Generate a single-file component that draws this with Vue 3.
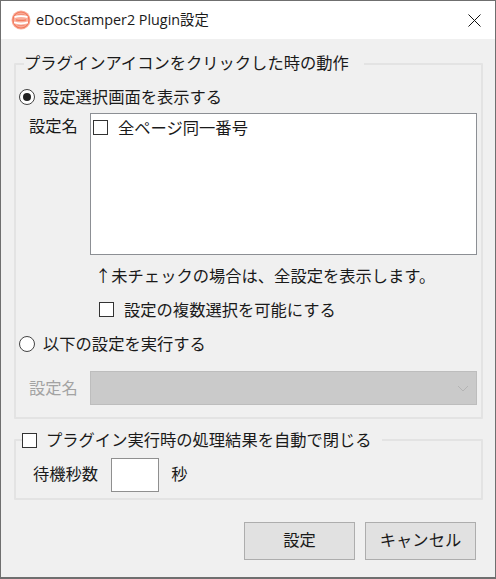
<template>
  <div class="window">
    <header class="titlebar">
      <svg class="app-icon" width="20" height="20" viewBox="0 0 20 20">
        <circle cx="10" cy="10" r="9.5" fill="#f9ae9b" />
        <circle cx="10" cy="10" r="8" fill="none" stroke="#f2775a" stroke-width="1.2" />
        <path d="M3.5 7.2q6.5-2 13 0M3 12.4q7 2.2 14 0" fill="none" stroke="#fff" stroke-width="1.8" />
        <path d="M5 9.8q5 1.2 10 0" fill="none" stroke="#f27a5e" stroke-width="1.2" />
        <path d="M6.5 4.4h7M6.5 15.6h7" stroke="#f28b73" stroke-width="1" />
      </svg>
      <span class="title">eDocStamper2 Plugin設定</span>
      <svg class="close" width="13" height="13" viewBox="0 0 13 13">
        <path d="M.5.5l12 12M12.5.5l-12 12" stroke="#111" stroke-width="1" fill="none" />
      </svg>
    </header>

    <main class="content">
      <fieldset class="group action-group">
        <legend>プラグインアイコンをクリックした時の動作</legend>

        <label class="row radio-row">
          <span class="radio checked"></span>
          <span>設定選択画面を表示する</span>
        </label>

        <div class="list-row">
          <span class="field-label">設定名</span>
          <div class="listbox">
            <label v-for="item in settings" :key="item" class="list-item">
              <span class="checkbox"></span>
              <span>{{ item }}</span>
            </label>
          </div>
        </div>

        <p class="hint">↑未チェックの場合は、全設定を表示します。</p>

        <label class="row multi-row">
          <span class="checkbox"></span>
          <span>設定の複数選択を可能にする</span>
        </label>

        <label class="row radio-row second">
          <span class="radio"></span>
          <span>以下の設定を実行する</span>
        </label>

        <div class="select-row">
          <span class="field-label disabled">設定名</span>
          <div class="select">
            <svg width="12" height="7" viewBox="0 0 12 7">
              <path d="M1 1l5 5 5-5" fill="none" stroke="#b4b4b4" stroke-width="1" />
            </svg>
          </div>
        </div>
      </fieldset>

      <fieldset class="group close-group">
        <legend class="check-legend">
          <span class="checkbox"></span>
          <span class="lift">プラグイン実行時の処理結果を自動で閉じる</span>
        </legend>
        <div class="wait-row">
          <span class="lift-more">待機秒数</span>
          <span class="seconds-input"></span>
          <span class="lift-more">秒</span>
        </div>
      </fieldset>

      <footer class="buttons">
        <button class="btn">設定</button>
        <button class="btn">キャンセル</button>
      </footer>
    </main>
  </div>
</template>

<script setup>
const settings = ['全ページ同一番号']
</script>

<style>
html, body {
  margin: 0;
  background: #f0f0f0;
}
</style>

<style scoped>
.window {
  width: 496px;
  height: 579px;
  box-sizing: border-box;
  border: 1px solid #6f6f6f;
  border-bottom-width: 2px;
  display: flex;
  flex-direction: column;
  background: #f0f0f0;
  color: #1a1a1a;
  font-family: "Noto Sans CJK JP", "Noto Sans", sans-serif;
  font-size: 16.3px;
  line-height: 24px;
  overflow: hidden;
}

.titlebar {
  height: 38px;
  flex: none;
  background: #fff;
  display: flex;
  align-items: center;
  padding: 0 14px 0 10px;
}

.app-icon {
  flex: none;
  margin-right: 5px;
}

.title {
  flex: 1;
  font-family: "Open Sans", "Noto Sans CJK JP", sans-serif;
  font-size: 14.35px;
}

.content {
  flex: 1;
  padding: 13px 12px 0 13px;
  display: flex;
  flex-direction: column;
}

.group {
  margin: 0;
  padding: 0;
  min-width: 0;
  border: 2px solid #e3e3e3;
  border-radius: 1px;
}

.group legend {
  padding: 0 15px 0 0;
  margin-left: 5px;
  height: 24px;
  line-height: 20px;
  white-space: nowrap;
}

.action-group {
  height: 367px;
  box-sizing: border-box;
  padding: 9px 4px 0 3px;
}

.row {
  display: flex;
  align-items: center;
  height: 24px;
}

.radio-row > span:last-child {
  margin-left: 8px;
  padding-bottom: 2px;
}

.radio {
  width: 14px;
  height: 14px;
  border: 1.5px solid #444;
  border-radius: 50%;
  background: #fff;
  flex: none;
  position: relative;
}

.radio.checked::after {
  content: "";
  position: absolute;
  inset: 3px;
  border-radius: 50%;
  background: #222;
}

.checkbox {
  width: 13px;
  height: 13px;
  border: 1.5px solid #333;
  background: #fff;
  flex: none;
  display: block;
}

.list-row {
  display: flex;
  margin-top: 4px;
  height: 142px;
}

.field-label {
  width: 71px;
  flex: none;
  padding-left: 10px;
  box-sizing: border-box;
}

.field-label.disabled {
  color: #a3a3a3;
  padding-bottom: 3px;
}

.listbox {
  width: 387px;
  box-sizing: border-box;
  border: 1px solid #8c8f94;
  background: #fff;
  padding: 1px 2px;
}

.list-item {
  display: flex;
  align-items: center;
  gap: 10px;
  height: 24px;
}

.hint {
  margin: 9px 0 0 76px;
  height: 24px;
  line-height: 22px;
}

.multi-row {
  margin: 9px 0 0 80px;
  gap: 10px;
}

.second {
  margin-top: 11px;
}

.select-row {
  display: flex;
  align-items: center;
  margin-top: 15px;
  height: 34px;
}

.select {
  width: 387px;
  height: 34px;
  box-sizing: border-box;
  border: 1px solid #bdbdbd;
  background: #cacaca;
  display: flex;
  align-items: center;
  justify-content: flex-end;
  padding-right: 7px;
}

.close-group {
  margin-top: 9px;
  height: 72px;
  box-sizing: border-box;
}

.group .check-legend {
  margin-left: 6px;
  padding: 0 10px 0 0;
  display: flex;
  align-items: center;
  gap: 9px;
}

.lift {
  padding-bottom: 2px;
}

.wait-row {
  display: flex;
  align-items: center;
  margin: 6px 0 0 17px;
  height: 34px;
}

.lift-more {
  padding-bottom: 4px;
}

.seconds-input {
  width: 48px;
  height: 34px;
  box-sizing: border-box;
  border: 1px solid #8f8f8f;
  background: #fff;
  margin: 0 12px 0 13px;
}

.buttons {
  display: flex;
  justify-content: flex-end;
  gap: 10px;
  margin-top: 22px;
  padding-right: 7px;
}

.btn {
  width: 111px;
  height: 38px;
  padding: 0 0 4px;
  border: 1px solid #adadad;
  border-radius: 0;
  background: #e1e1e1;
  color: #1a1a1a;
  font: inherit;
}
</style>
